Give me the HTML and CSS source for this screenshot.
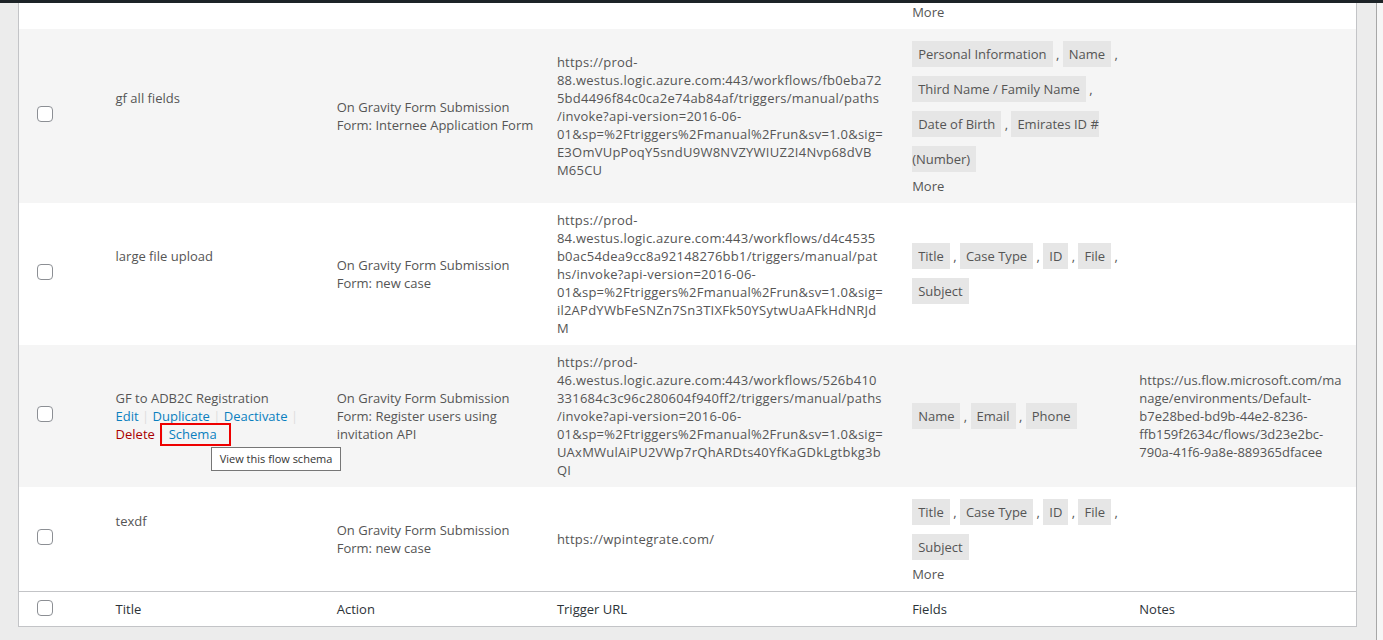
FILE: index.html
```html
<!DOCTYPE html>
<html lang="en">
<head>
  <meta charset="UTF-8" />
  <meta name="viewport" content="width=device-width, initial-scale=1.0"/>
  <title>Flows</title>
  <link rel="stylesheet" href="styles.css">
</head>
<body>
  <div id="wpadminbar"></div>
  <div class="screen">
    <div class="wrap">
      <table class="flows">
        <colgroup>
          <col class="col-check">
          <col class="col-title">
          <col class="col-action">
          <col class="col-url">
          <col class="col-fields">
          <col class="col-notes">
        </colgroup>
        <tbody>
          <!-- tail of the previous row, scrolled mostly out of view -->
          <tr class="row-tail">
            <td class="check"></td>
            <td></td>
            <td></td>
            <td></td>
            <td class="fields"><div class="more">More</div></td>
            <td></td>
          </tr>

          <tr class="alt">
            <td class="check"><input type="checkbox" /></td>
            <td class="title">
              <div class="flow-name">gf all fields</div>
              <div class="row-actions">
                <span class="edit"><a href="#">Edit</a> | </span><span><a href="#">Duplicate</a> | </span><span><a href="#">Deactivate</a> | </span><span class="trash"><a href="#">Delete</a> | </span><span><a href="#">Schema</a></span>
              </div>
            </td>
            <td class="action">On Gravity Form Submission Form: Internee Application Form</td>
            <td class="url">https://prod-88.westus.logic.azure.com:443/workflows/fb0eba725bd4496f84c0ca2e74ab84af/triggers/manual/paths/invoke?api-version=2016-06-01&amp;sp=%2Ftriggers%2Fmanual%2Frun&amp;sv=1.0&amp;sig=E3OmVUpPoqY5sndU9W8NVZYWIUZ2I4Nvp68dVBM65CU</td>
            <td class="fields">
              <div class="field-list"><span class="tag">Personal Information</span> , <span class="tag">Name</span> , <span class="tag">Third Name / Family Name</span> , <span class="tag">Date of Birth</span> , <span class="tag">Emirates ID # (Number)</span></div>
              <div class="more">More</div>
            </td>
            <td class="notes"></td>
          </tr>

          <tr>
            <td class="check"><input type="checkbox" /></td>
            <td class="title">
              <div class="flow-name">large file upload</div>
              <div class="row-actions">
                <span class="edit"><a href="#">Edit</a> | </span><span><a href="#">Duplicate</a> | </span><span><a href="#">Deactivate</a> | </span><span class="trash"><a href="#">Delete</a> | </span><span><a href="#">Schema</a></span>
              </div>
            </td>
            <td class="action">On Gravity Form Submission Form: new case</td>
            <td class="url">https://prod-84.westus.logic.azure.com:443/workflows/d4c4535b0ac54dea9cc8a92148276bb1/triggers/manual/paths/invoke?api-version=2016-06-01&amp;sp=%2Ftriggers%2Fmanual%2Frun&amp;sv=1.0&amp;sig=il2APdYWbFeSNZn7Sn3TIXFk50YSytwUaAFkHdNRJdM</td>
            <td class="fields">
              <div class="field-list"><span class="tag">Title</span> , <span class="tag">Case Type</span> , <span class="tag">ID</span> , <span class="tag">File</span> , <span class="tag">Subject</span></div>
            </td>
            <td class="notes"></td>
          </tr>

          <tr class="alt hover">
            <td class="check"><input type="checkbox" /></td>
            <td class="title">
              <div class="flow-name">GF to ADB2C Registration</div>
              <div class="row-actions">
                <span class="edit"><a href="#">Edit</a> | </span><span><a href="#">Duplicate</a> | </span><span><a href="#">Deactivate</a> | </span><span class="trash"><a href="#">Delete</a> | </span><span class="schema"><a href="#">Schema</a><span class="tooltip">View this flow schema</span></span>
              </div>
            </td>
            <td class="action">On Gravity Form Submission Form: Register users using invitation API</td>
            <td class="url">https://prod-46.westus.logic.azure.com:443/workflows/526b410331684c3c96c280604f940ff2/triggers/manual/paths/invoke?api-version=2016-06-01&amp;sp=%2Ftriggers%2Fmanual%2Frun&amp;sv=1.0&amp;sig=UAxMWulAiPU2VWp7rQhARDts40YfKaGDkLgtbkg3bQI</td>
            <td class="fields">
              <div class="field-list"><span class="tag">Name</span> , <span class="tag">Email</span> , <span class="tag">Phone</span></div>
            </td>
            <td class="notes">https://us.flow.microsoft.com/manage/environments/Default-b7e28bed-bd9b-44e2-8236-ffb159f2634c/flows/3d23e2bc-790a-41f6-9a8e-889365dfacee</td>
          </tr>

          <tr>
            <td class="check"><input type="checkbox" /></td>
            <td class="title">
              <div class="flow-name">texdf</div>
              <div class="row-actions">
                <span class="edit"><a href="#">Edit</a> | </span><span><a href="#">Duplicate</a> | </span><span><a href="#">Deactivate</a> | </span><span class="trash"><a href="#">Delete</a> | </span><span><a href="#">Schema</a></span>
              </div>
            </td>
            <td class="action">On Gravity Form Submission Form: new case</td>
            <td class="url">https://wpintegrate.com/</td>
            <td class="fields">
              <div class="field-list"><span class="tag">Title</span> , <span class="tag">Case Type</span> , <span class="tag">ID</span> , <span class="tag">File</span> , <span class="tag">Subject</span></div>
              <div class="more">More</div>
            </td>
            <td class="notes"></td>
          </tr>
        </tbody>
        <tfoot>
          <tr>
            <td class="check"><input type="checkbox" /></td>
            <th>Title</th>
            <th>Action</th>
            <th>Trigger URL</th>
            <th>Fields</th>
            <th>Notes</th>
          </tr>
        </tfoot>
      </table>
    </div>
  </div>
</body>
</html>
```

FILE: styles.css
```css
body {
  margin: 0;
  background: #f6f6f6;
  font-family: -apple-system, BlinkMacSystemFont, "Segoe UI", "Open Sans", sans-serif;
  font-size: 13px;
  line-height: 18px;
  color: #555;
}
#wpadminbar {
  height: 3px;
  background: #1d2327;
}
.screen {
  width: 1377px;
  min-height: 637px;
  background: #ececec;
  border-right: 1px solid #a7a7a7;
  box-sizing: border-box;
}
.wrap {
  padding: 0 20px 0 18px;
}
.flows {
  width: 1339px;
  table-layout: fixed;
  border-collapse: collapse;
  background: #fff;
  border: 1px solid #c3c4c7;
  border-top: none;
}
.col-check { width: 87px; }
.col-title { width: 221px; }
.col-action { width: 220px; }
.col-url { width: 355px; }
.col-fields { width: 227px; }
.col-notes { width: 227px; }

.flows td,
.flows th {
  padding: 8px 10px;
  vertical-align: middle;
  text-align: left;
  font-weight: normal;
}
.flows tr.alt {
  background: #f5f5f5;
}
.flows tr.row-tail td {
  padding-top: 0;
}
.flows td.check {
  padding: 0 0 0 18px;
}
.flows tfoot td,
.flows tfoot th {
  border-top: 1px solid #c3c4c7;
  color: #2c3338;
}
input[type="checkbox"] {
  appearance: none;
  -webkit-appearance: none;
  display: block;
  width: 16px;
  height: 16px;
  margin: 0 0 5px;
  border: 1px solid #8c8f94;
  border-radius: 4px;
  background: #fff;
  box-sizing: border-box;
}
.flows tfoot input[type="checkbox"] {
  margin: 0 0 3px;
}

/* title column */
.row-actions {
  visibility: hidden;
  color: #ddd;
}
.hover .row-actions {
  visibility: visible;
}
.row-actions a {
  color: #0a7fbf;
  text-decoration: none;
}
.row-actions .trash a {
  color: #a00;
}
.row-actions .schema {
  position: relative;
}
.row-actions .schema::before {
  content: "";
  position: absolute;
  left: -9px;
  right: -14px;
  top: -2px;
  bottom: -3px;
  border: 2px solid #e00;
}
.tooltip {
  position: absolute;
  left: 42px;
  top: 22px;
  white-space: nowrap;
  padding: 4px 8px;
  font-size: 11px;
  line-height: 14px;
  color: #333;
  background: #fff;
  border: 1px solid #767676;
}

/* long urls break anywhere */
.flows td.url,
.flows td.notes {
  overflow-wrap: break-word;
}
.flows td.url {
  padding-right: 19px;
  letter-spacing: 0.25px;
}

/* fields column */
.field-list {
  line-height: 35px;
}
.tag {
  padding: 4px 6px;
  background: #e6e6e6;
}
.more {
  line-height: 18px;
}
```
